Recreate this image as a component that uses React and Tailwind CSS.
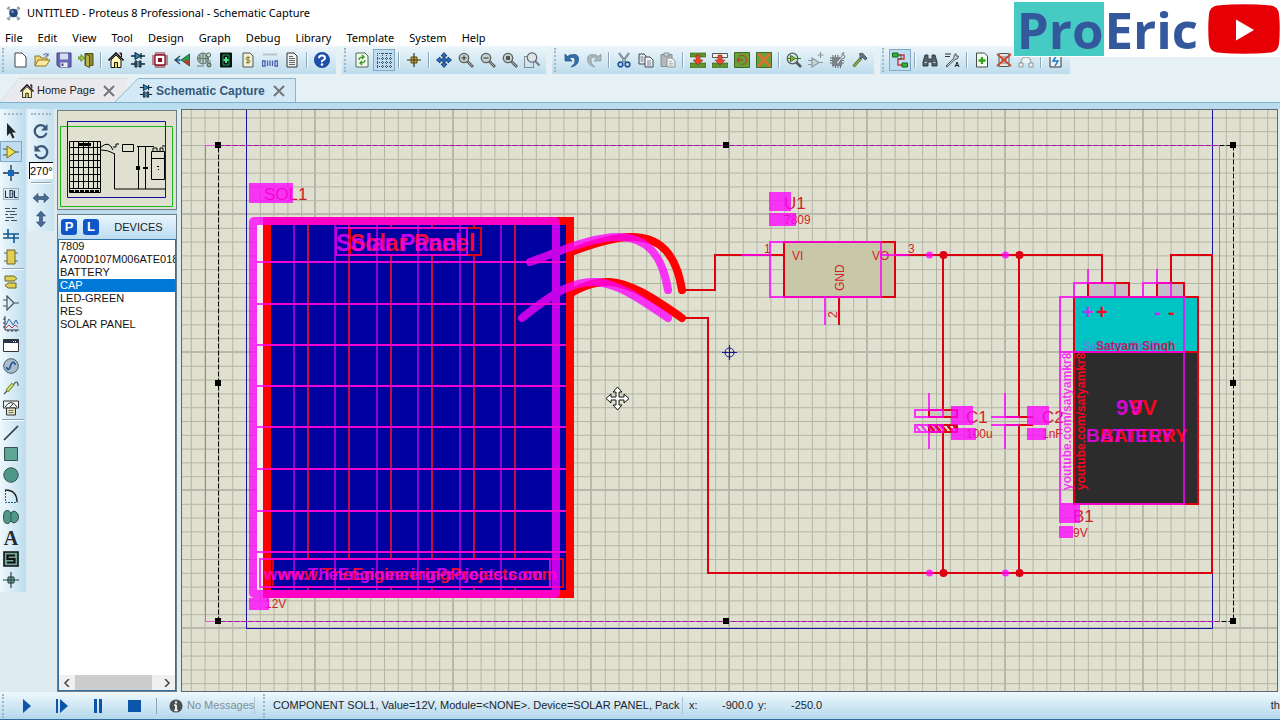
import { useState } from 'react'
import clsx from 'clsx'

const menus = ['File', 'Edit', 'View', 'Tool', 'Design', 'Graph', 'Debug', 'Library', 'Template', 'System', 'Help']

const devices = ['7809', 'A700D107M006ATE018', 'BATTERY', 'CAP', 'LED-GREEN', 'RES', 'SOLAR PANEL']

const page = <path d="M3 1h7l4 4v10H3z" fill="#fff" stroke="#444" />

const lens = (
  <>
    <path d="M9.5 9.5L15 15" stroke="#555" strokeWidth="2.6" />
    <path d="M10 10l4.500 4.500" stroke="#bbb" strokeWidth="1" />
    <circle cx="6" cy="6" r="4.700" fill="#c3cfcb" stroke="#59605f" strokeWidth="1.300" />
  </>
)

const house = (
  <>
    <path d="M3 8v7.500h10V8L8 3z" fill="#fff8b8" stroke="#111" />
    <path d="M.5 8.500L8 1l7.500 7.500" fill="none" stroke="#111" strokeWidth="1.600" />
    <path d="M11.500 1h2v4" fill="#a22" stroke="#111" />
    <path d="M6.500 15.500v-5h3v5" fill="#e8d860" stroke="#111" />
  </>
)

const schematic = (
  <>
    <path d="M1 4h14M1 12h4M11 12h4M11 1v6" stroke="#15242f" strokeWidth="1.300" />
    <path d="M5 .5v7L11 4z" fill="#2484b8" stroke="#15242f" />
    <path d="M5 9h2v6H5zM9 9h2v6H9z" fill="#2f6f96" stroke="#15242f" />
  </>
)

const board = <path d="M0 1h16v4H0zM0 11h16v5H0z" fill="#5d9630" stroke="#3d6a22" strokeWidth=".7" />

const icons = {
  app: (
    <>
      <path d="M2 2l12 12M14 2L2 14" stroke="#a9b6c6" strokeWidth="2.500" />
      <path d="M1 3l3-2M12 1l3 2M1 13l3 2M12 15l3-2" stroke="#8897aa" strokeWidth="1.500" />
      <circle cx="8" cy="7.500" r="4.600" fill="#23457c" />
      <circle cx="7" cy="6" r="1.800" fill="#6587ba" />
    </>
  ),
  new: page,
  open: (
    <>
      <path d="M1 14V4h5l1 2h6v3" fill="#f1d873" stroke="#8a7432" />
      <path d="M1 14l3-6h12l-4 6z" fill="#fce99a" stroke="#8a7432" />
      <path d="M9 3q3-3 5 0m0-2v3h-3" fill="none" stroke="#4a6c9a" />
    </>
  ),
  save: (
    <>
      <path d="M1 1h14v14H3l-2-2z" fill="#6868b8" stroke="#41417d" />
      <path d="M4 1.500h8v6H4z" fill="#d6dcf1" />
      <path d="M4.500 10.500h7V15h-7z" fill="#eee" />
      <path d="M5.500 11.500h2V14h-2z" fill="#444a82" />
    </>
  ),
  exit: (
    <>
      <path d="M7 1.500h8v12H7z" fill="#8c8c2a" stroke="#4f4f18" />
      <path d="M7.500 2l4 2v11.500l-4-2z" fill="#b8b450" stroke="#4f4f18" />
      <path d="M0 5h3V2.500L6.500 6 3 9.500V7H0z" fill="#a6d238" stroke="#55741c" strokeWidth=".8" />
    </>
  ),
  home: house,
  schematic,
  chip: (
    <>
      <path d="M4 0v16M6 0v16M8 0v16M10 0v16M12 0v16M0 4h16M0 6h16M0 8h16M0 10h16M0 12h16" stroke="#8d1021" strokeWidth=".9" />
      <path d="M3 3h10v10H3z" fill="#fff" stroke="#8d1021" strokeWidth="1.300" />
      <path d="M6 6h4v4H6z" fill="#8d1021" />
    </>
  ),
  view3d: (
    <>
      <path d="M15.500 2v12L7 8z" fill="#2e9952" stroke="#14522a" strokeWidth=".8" />
      <path d="M15.500 8v6L9 9z" fill="#b83a2c" />
      <path d="M6 4L1 8l5 4M1 8h4" fill="none" stroke="#2d4355" strokeWidth="1.300" />
      <circle cx="5" cy="8" r="1.600" fill="#1e88b8" />
    </>
  ),
  gerber: (
    <>
      <circle cx="7" cy="6.500" r="5.500" fill="#b6c5c0" stroke="#59706a" />
      <path d="M2 6.500h10M7 1v11M4 2.500v8M10 2.500v8M1 14h7M12 4v11M14 8v7" stroke="#597268" strokeWidth=".9" />
      <circle cx="12.500" cy="3" r="2" fill="#dfe8e4" stroke="#3f5d54" />
      <circle cx="13" cy="13" r="2" fill="#9eb3ac" stroke="#3f5d54" />
    </>
  ),
  explorer: (
    <>
      <path d="M2.500 1h11v14h-11z" fill="#08140f" stroke="#111" />
      <path d="M5 3h6v10H5z" fill="none" stroke="#1c9d5c" />
      <path d="M8 5v6M5.500 8h5" stroke="#53e78f" strokeWidth="2" />
    </>
  ),
  bom: (
    <>
      <path d="M3 1h7l3 3v11H3z" fill="#eef0d8" stroke="#555" />
      <path d="M10 5.500H7.500q-1.500 0-1.500 1.200T7.500 8h1q1.500 0 1.500 1.300t-1.500 1.200H6M8 4v8" fill="none" stroke="#857a24" />
    </>
  ),
  source: (
    <>
      <path d="M1 2.500h14" stroke="#b8c4d0" strokeWidth="2" />
      <path d="M.5 9h2.500v5H.5zM13 9h2.500v5H13zM5.500 8.500V14M8 8.500V14M10.500 8.500V14" fill="none" stroke="#4d62a8" strokeWidth="1.300" />
    </>
  ),
  notes: (
    <>
      <path d="M3 1h7l3 3v11H3z" fill="#eef3f3" stroke="#333" />
      <path d="M5 4.500h4M5 6.500h6M5 8.500h6M5 10.500h6M5 12.500h6" stroke="#555" strokeWidth=".9" />
    </>
  ),
  help: (
    <>
      <circle cx="8" cy="8" r="7.700" fill="#1c50ae" stroke="#123a80" strokeWidth=".6" />
      <path d="M5 6.200Q5 3.500 8 3.500t3 2.500q0 1.500-1.700 2.200T8 10.200" fill="none" stroke="#fff" strokeWidth="2" />
      <circle cx="8" cy="12.600" r="1.300" fill="#fff" />
    </>
  ),
  redraw: (
    <>
      <path d="M2 1h9l3 3v11H2z" fill="#f3faef" stroke="#4e6a58" />
      <path d="M5 8q0-3 4.500-3M8 3l2 2-2 2M11 8q0 3-4.500 3M8 9l-2 2 2 2" fill="none" stroke="#3da023" strokeWidth="1.400" />
    </>
  ),
  grid: (
    <path d="M1 1.500h15M1 6.500h15M1 10.500h15M1 14.500h15M1.500 1v15M6.500 1v15M10.500 1v15M14.500 1v15" stroke="#40505c" strokeDasharray="1 1" />
  ),
  origin: (
    <>
      <path d="M8 1v14M1 8h14" stroke="#38301a" strokeWidth="1.200" />
      <path d="M5 5h6v6H5z" fill="#cfae2c" stroke="#5b4a12" />
      <path d="M8 5v6M5 8h6" stroke="#38301a" />
    </>
  ),
  pan: (
    <path d="M8 .5L11 4H9v3h3V5l3.500 3L12 11V9H9v3h2l-3 3.500L5 12h2V9H4v2L.5 8 4 5v2h3V4H5z" fill="#2a6fc4" stroke="#123767" strokeWidth=".9" />
  ),
  zoomIn: <>{lens}<path d="M3.500 6h5M6 3.500v5" stroke="#333" /></>,
  zoomOut: <>{lens}<path d="M3.500 6h5" stroke="#333" /></>,
  zoomAll: <>{lens}<path d="M4 4h4v4H4z" fill="#555" /></>,
  zoomArea: (
    <>
      <path d="M.5 4.500h9v11h-9z" fill="none" stroke="#333" strokeDasharray="1 1" />
      <g transform="translate(2 0)">
        <path d="M9 9l4.500 4.500" stroke="#777" strokeWidth="2" />
        <circle cx="6" cy="5.500" r="4.700" fill="#dce4e6" stroke="#667" strokeWidth="1.200" />
      </g>
    </>
  ),
  undo: <path d="M1 2v7h7L5.500 6.500Q10 3.500 11 7.500T7 15q7-1.500 7.500-7T10 2.500 3.500 4.500z" fill="#2f6fae" stroke="#204d7c" strokeWidth=".7" />,
  redo: <path d="M15 2v7H8l2.500-2.500Q6 3.500 5 7.500T9 15Q2 13.500 1.500 8T6 2.500t6.500 2z" fill="#abb7bd" stroke="#87949b" strokeWidth=".7" />,
  cut: (
    <>
      <path d="M3 1l6.500 9M13 1L6.500 10" stroke="#4b5a68" strokeWidth="2" />
      <path d="M3 1l6.500 9M13 1L6.500 10" stroke="#dde6ea" strokeWidth=".7" />
      <circle cx="4.500" cy="12.500" r="2.300" fill="none" stroke="#23569a" strokeWidth="1.700" />
      <circle cx="11.500" cy="12.500" r="2.300" fill="none" stroke="#23569a" strokeWidth="1.700" />
    </>
  ),
  copy: (
    <>
      <path d="M1 2h5l2 2v8H1z" fill="#e8eef2" stroke="#3c4650" />
      <path d="M7 5h5l3 3v7H7z" fill="#f4f8fa" stroke="#3c4650" />
      <path d="M2.500 5h3M2.500 7h3M2.500 9h3M9 9h4M9 11h4M9 13h4" stroke="#66727c" strokeWidth=".9" />
    </>
  ),
  paste: (
    <>
      <path d="M1 2.500h11v12H1z" fill="#b4babc" stroke="#868d90" />
      <path d="M4 1h5v3H4z" fill="#d8dcdd" stroke="#868d90" />
      <path d="M7 6h5l3 3v6H7z" fill="#eef1f2" stroke="#8c9396" />
      <path d="M9 9.500h3M9 11.500h4M9 13h4" stroke="#a0a7aa" strokeWidth=".8" />
    </>
  ),
  blockCopy: <>{board}<path d="M6 3h4v5h3l-5 5-5-5h3z" fill="#e8482c" stroke="#9a2415" strokeWidth=".6" /></>,
  blockMove: (
    <>
      <path d="M.5 1.500h15v4H.5z" fill="#f2f5f3" stroke="#555" />
      <path d="M0 11h16v5H0z" fill="#5d9630" stroke="#3d6a22" strokeWidth=".7" />
      <path d="M6 3h4v5h3l-5 5-5-5h3z" fill="#e8482c" stroke="#9a2415" strokeWidth=".6" />
    </>
  ),
  blockRotate: (
    <>
      <path d="M.5.500h15v15H.5z" fill="#6ba038" stroke="#3d6a22" />
      <path d="M3 8h6M5.500 5.500L3 8l2.500 2.500M5 4q6-2 7.500 3T7 12.500" fill="none" stroke="#a0502a" strokeWidth="1.300" />
    </>
  ),
  blockDelete: (
    <>
      <path d="M.5.500h15v15H.5z" fill="#6ba038" stroke="#3d6a22" />
      <path d="M2 1.500l12 13M14 1.500l-12 13" stroke="#f06a30" strokeWidth="2.200" />
    </>
  ),
  pick: (
    <>
      <path d="M10 10l5 5" stroke="#555" strokeWidth="2.600" />
      <circle cx="6.500" cy="6.500" r="5.300" fill="#d5e3dc" stroke="#4b5f68" strokeWidth="1.200" />
      <path d="M4.500 3.500v6l5-3z" fill="#8bbd3d" stroke="#3f6d23" />
      <path d="M1.500 6.500h3M9.500 6.500H15" stroke="#3f6d23" />
    </>
  ),
  makeDevice: <path d="M4 6v9l7-4.500zM0 8.500h4M0 12.500h4M11 10.500h4M12.500 0v6M9.500 3h6" fill="#cbd6da" stroke="#8d999e" strokeWidth="1.200" />,
  package: (
    <>
      <path d="M3 3v12M5.500 3v13M8 3v13M10.500 5v11M0 6h14M0 8.500h14M0 11h14" stroke="#5e6669" />
      <path d="M2 5h10v9H2z" fill="#7b8488" />
      <path d="M6 11l6-7q-1-3 2-3.500L13 3l2 1q0 3-3 2.500L8 12z" fill="#e5eaec" stroke="#666f73" strokeWidth=".8" />
    </>
  ),
  decompose: (
    <>
      <path d="M1.500 14.500L9 6" stroke="#53702c" strokeWidth="3" />
      <path d="M1.500 14.500L9 6" stroke="#93b04c" strokeWidth="1.300" />
      <path d="M7 2q4-2 5 1l3 3-1.500 2-3-2.500L8 7" fill="#67737a" stroke="#3a454b" strokeWidth=".8" />
    </>
  ),
  autoroute: (
    <>
      <path d="M7 3h5v4H6v6h5" fill="none" stroke="#c8383a" strokeWidth="1.400" />
      <path d="M4 3h5v4H6" fill="none" stroke="#555" />
      <path d="M.5 1h5.500v4H.5zM10 11h5.500v4H10z" fill="#35b42d" stroke="#17631a" />
    </>
  ),
  search: (
    <>
      <path d="M3 3h3v4h4V3h3l2 7v4h-5v-4H6v4H1v-4z" fill="#56626a" stroke="#2b343a" strokeWidth=".9" />
      <path d="M2.500 10.500h2.500M11 10.500h2.500" stroke="#c6d0d6" />
    </>
  ),
  property: (
    <>
      <path d="M1 2h6M1 4.500h5" stroke="#333" />
      <path d="M2 14l8-8q-1-3 2-4.500V4h2.500q0 3.500-3.500 3.500L3 15z" fill="#cdd6da" stroke="#3c484f" strokeWidth=".9" />
      <path d="M11 15l2-5 2 5M12 13.500h2" fill="none" stroke="#222" />
    </>
  ),
  addSheet: (
    <>
      <path d="M2.500 1h8l3 3v11h-11z" fill="#f6faf5" stroke="#3f4c48" />
      <path d="M8 5v7M4.500 8.500h7" stroke="#33a317" strokeWidth="2.300" />
    </>
  ),
  removeSheet: (
    <>
      <path d="M3 1.500h10v13H3z" fill="#e2e5e4" stroke="#555" />
      <path d="M5 5h6M5 8h6M5 11h6" stroke="#777" />
      <path d="M1 2l14 12M15 2L1 14" stroke="#cf412b" strokeWidth="1.700" />
    </>
  ),
  exitSheet: <path d="M1 11h4v4H1zM11 11h4v4h-4zM3 11q0-6 5-6t5 6M8 5V2" fill="#edf1f2" stroke="#8a9499" />,
  erc: (
    <>
      <path d="M2 2h11v13H2z" fill="#eaf3f8" stroke="#333" />
      <path d="M9 3L5 9h5l-3 5" fill="none" stroke="#1673c6" strokeWidth="1.400" />
    </>
  ),
  select: <path d="M4 0v13l3-3 2.500 5.500 2-1L9 9.500h4z" fill="#20262c" />,
  component: (
    <>
      <path d="M0 5h5M0 11h5M12 8h4" stroke="#4b5238" strokeWidth="1.200" />
      <path d="M4 2v12l8.500-6z" fill="#efe04c" stroke="#6c6a20" />
    </>
  ),
  junction: (
    <>
      <path d="M8 0v16M0 8h16" stroke="#1d3245" strokeWidth="1.300" />
      <path d="M5 5h6v6H5z" fill="#1668b6" />
    </>
  ),
  label: (
    <>
      <path d="M.5 2.500h15v11H.5z" fill="none" stroke="#678" strokeDasharray="1 1" />
      <path d="M2.500 4.500v7h3M7 4.500v7h1.500q1.500 0 1.500-2T8.500 8Q10 8 10 6.200T8.500 4.500zM11.500 4.500v7h3" fill="none" stroke="#1d2f44" strokeWidth="1.100" />
    </>
  ),
  script: <path d="M2 1.500h5M9 1.500h5M3 4.500h9M2 7.500h3M7 7.500h7M3 10.500h8M2 13.500h4M8 13.500h6" stroke="#44525a" />,
  bus: <path d="M0 6h16M0 10h16M5 1v9M11 6v9" stroke="#16588c" strokeWidth="1.600" />,
  subcircuit: (
    <>
      <path d="M1 4h3M1 12h3M12 4h3M12 12h3" stroke="#6b6431" />
      <path d="M4 1h8v14H4z" fill="#e1cf52" stroke="#6b6431" />
    </>
  ),
  terminal: (
    <>
      <path d="M2 2h9l3 2.500L11 7H2z" fill="#e1cf52" stroke="#6b6431" />
      <path d="M13 9H5l-3 2.500L5 14h8z" fill="#e1cf52" stroke="#6b6431" />
    </>
  ),
  pin: <path d="M0 5h4M0 11h4M4 1v14l7-7zM11 8h5" fill="none" stroke="#46525a" strokeWidth="1.200" />,
  graph: (
    <>
      <path d="M2 0v14h14M0 3h2M0 7h2M0 11h2M5 14v2M9 14v2M13 14v2" fill="none" stroke="#333" />
      <path d="M3 9l3-6 4 6 3-5 2 4" fill="none" stroke="#2463b2" />
      <path d="M3 12l3-3 3 3 3-3 3 2" fill="none" stroke="#b43a4e" />
    </>
  ),
  popup: (
    <>
      <path d="M.5 2.500h15v12H.5z" fill="#fbfdfe" stroke="#333" />
      <path d="M1 3h14v3H1z" fill="#27344e" />
      <path d="M10 4.500h1M12 4.500h1" stroke="#fff" />
    </>
  ),
  generator: (
    <>
      <circle cx="8" cy="8" r="7.300" fill="#a9bdcd" stroke="#4c5c69" />
      <path d="M3.500 9q1 4 3 1.500l2-5q2.500-3 4 1.500" fill="none" stroke="#1c4e91" strokeWidth="1.500" />
    </>
  ),
  probe: (
    <>
      <path d="M1 15l4-4 6-6q3-4 4 0v2" fill="none" stroke="#4e5940" strokeWidth="1.200" />
      <path d="M4 12l6-7" stroke="#75862b" strokeWidth="3.500" />
      <path d="M4.500 11.500L9.500 5.500" stroke="#ddec72" strokeWidth="1.800" />
    </>
  ),
  meter: (
    <>
      <path d="M.5 1h15v7H.5z" fill="#f3f6f6" stroke="#333" />
      <path d="M2 7q6-9 12 0M7 7l4-4" fill="none" stroke="#333" />
      <path d="M3.500 8h9v7h-9z" fill="#e7e3c0" stroke="#333" />
      <path d="M5.500 10.500h5M5.500 12.500h5" stroke="#776" />
    </>
  ),
  line: <path d="M1 15L15 1" stroke="#333b42" strokeWidth="1.700" />,
  box: <path d="M1.500 1.500h13v13h-13z" fill="#5fa596" stroke="#35524c" />,
  circle: <circle cx="8" cy="8" r="7.200" fill="#4d9888" stroke="#35524c" />,
  arc: (
    <>
      <path d="M2.500 2v12.500h12" fill="none" stroke="#235b8c" strokeDasharray="2 1" />
      <path d="M2 2q12 0 12 12" fill="none" stroke="#222" strokeWidth="1.400" />
    </>
  ),
  blob: <path d="M8 4Q6.500 1 3.500 1.500T.5 8t3 6.500T8 12q1.500 3 4.500 1.500T15.500 8t-3-5.500T8 4zM8 4v8" fill="#4d9888" stroke="#35524c" />,
  symbol: (
    <>
      <path d="M1 1h14v14H1z" fill="#6da899" stroke="#111" strokeWidth="1.600" />
      <path d="M12 4.500H4.500v3.500h7v3.500H4" fill="none" stroke="#111" strokeWidth="2.200" />
    </>
  ),
  marker: (
    <>
      <path d="M8 0v16M0 8h16" stroke="#2e4544" strokeWidth="1.200" />
      <path d="M5 5h6v6H5z" fill="#5fa596" stroke="#2e4544" />
      <path d="M8 4v8M4 8h8" stroke="#2e4544" />
    </>
  ),
  rotateCw: (
    <>
      <path d="M12.500 4.500A6 6 0 1 0 13.500 10" fill="none" stroke="#3b5576" strokeWidth="2.200" />
      <path d="M14.500 1v6.500H8z" fill="#3b5576" />
    </>
  ),
  rotateCcw: (
    <>
      <path d="M3.500 4.500A6 6 0 1 1 2.500 10" fill="none" stroke="#3b5576" strokeWidth="2.200" />
      <path d="M1.500 1v6.500H8z" fill="#3b5576" />
    </>
  ),
  flipX: <path d="M0 8l5-4.500v3h6v-3L16 8l-5 4.500v-3H5v3z" fill="#466a94" stroke="#2c4463" strokeWidth=".6" />,
  flipY: <path d="M8 0l4.500 5h-3v6h3L8 16l-4.500-5h3V5h-3z" fill="#466a94" stroke="#2c4463" strokeWidth=".6" />,
}

// '|' is a separator, a trailing '*' marks a pressed button
const toolbars = [
  ['new', 'open', 'save', 'exit', '|', 'home', 'schematic', 'chip', 'view3d', 'gerber', 'explorer', 'bom', 'source', 'notes', '|', 'help'],
  ['redraw', 'grid*', '|', 'origin', '|', 'pan', 'zoomIn', 'zoomOut', 'zoomAll', 'zoomArea'],
  ['undo', 'redo', '|', 'cut', 'copy', 'paste', '|', 'blockCopy', 'blockMove', 'blockRotate', 'blockDelete', '|', 'pick', 'makeDevice', 'package', 'decompose'],
  ['autoroute*', '|', 'search', 'property', '|', 'addSheet', 'removeSheet', 'exitSheet', '|', 'erc'],
]

const modes = [
  'select', 'component*', 'junction', 'label', 'script', 'bus', 'subcircuit', '|',
  'terminal', 'pin', 'graph', 'popup', 'generator', 'probe', 'meter', '|',
  'line', 'box', 'circle', 'arc', 'blob', 'text', 'symbol', 'marker',
]

function Icon({ name, className = 'size-4' }) {
  if (name === 'text') {
    return <span className="font-['Liberation_Serif',serif] text-[20px] leading-5 font-bold text-[#242b31]">A</span>
  }
  return (
    <svg viewBox="0 0 16 16" className={clsx('shrink-0', className)} aria-hidden="true">
      {icons[name]}
    </svg>
  )
}

function ToolButton({ id, className }) {
  const active = id.endsWith('*')
  const name = id.replace('*', '')
  return (
    <button
      aria-label={name}
      aria-pressed={active}
      className={clsx(
        'flex shrink-0 items-center justify-center border',
        active ? 'border-[#7fa9c4] bg-[#bfdcf0]' : 'border-transparent',
        className,
      )}
    >
      <Icon name={name} />
    </button>
  )
}

function Grip() {
  return <span className="h-6 border-l-2 border-dotted border-[#9fb8c8]" />
}

function Toolbar({ items }) {
  return (
    <div className="flex h-7 items-center bg-linear-to-b from-[#edf6fb] to-[#bddcec] pr-[3px]">
      <span className="flex w-[9px] shrink-0 pl-0.5"><Grip /></span>
      {items.map((id, i) =>
        id === '|' ? (
          <span key={i} className="flex w-2 shrink-0 justify-center">
            <span className="h-4 border-l border-r border-l-[#8aa5b5] border-r-white" />
          </span>
        ) : (
          <ToolButton key={i} id={id} className="h-[22px] w-[22px]" />
        ),
      )}
    </div>
  )
}

function CloseMark() {
  return (
    <svg viewBox="0 0 12 12" className="size-3" aria-hidden="true">
      <path d="M1 1l10 10M11 1L1 11" stroke="#72777b" strokeWidth="2" />
    </svg>
  )
}

function Tab({ icon, label, active }) {
  const fill = active ? '#d3eaf6' : '#e9e9ee'
  const line = active ? '#8db4cb' : '#d5dde2'
  return (
    <div className={clsx('flex h-6', active && '-ml-3')}>
      <svg viewBox="0 0 24 24" preserveAspectRatio="none" className={clsx('h-6', active ? 'w-6' : 'w-5')} aria-hidden="true">
        <path d="M0 24L24 0v24z" fill={fill} />
        <path d="M0 24L23 .5h1" fill="none" stroke={line} />
      </svg>
      <div
        className={clsx(
          'flex items-center gap-2 border-t',
          active ? 'border-r border-[#8db4cb] bg-[#d3eaf6] pr-2.5' : 'border-[#d5dde2] bg-[#e9e9ee] pr-3',
        )}
      >
        <button className={clsx('flex items-center gap-[3px]', active ? 'text-[12px] font-bold text-[#35597e]' : 'text-[11px] text-[#1c2226]')}>
          <Icon name={icon} className="size-3.5" />
          {label}
        </button>
        <button aria-label="Close tab">
          <CloseMark />
        </button>
      </div>
    </div>
  )
}

function Header() {
  return (
    <header className="relative bg-white">
      <div className="flex h-[26px] items-center gap-1.5 pl-1.5 font-['Noto_Sans',sans-serif] text-[11px] text-black">
        <Icon name="app" className="size-[15px]" />
        <h1>UNTITLED - Proteus 8 Professional - Schematic Capture</h1>
      </div>
      <nav className="flex h-5 items-end gap-[15px] pl-[5px] font-['Noto_Sans',sans-serif] text-[11px] leading-4 text-black">
        {menus.map((m) => (
          <button key={m}>{m}</button>
        ))}
      </nav>
      <div className="flex gap-1.5 bg-[#e6f1f5]">
        {toolbars.map((items, i) => (
          <Toolbar key={i} items={items} />
        ))}
      </div>
      <Banner />
    </header>
  )
}

function Banner() {
  return (
    <div className="absolute top-0 right-0 flex h-[57px] items-start bg-white">
      <div className="mt-0.5 flex h-[54px] items-center font-['Open_Sans',sans-serif] text-[51px] leading-[54px] font-bold text-[#34589c]">
        <span className="bg-[#45cbc3] pr-px pl-[3px]">Pro</span>
        <span>Eric</span>
      </div>
      <svg viewBox="0 0 72 50" className="mt-1 ml-2.5 h-[50px] w-[72px]" aria-hidden="true">
        <path d="M9 1.500Q36-1 63 1.500 70 2.500 71 10q1.500 15 0 30-1 7.500-8 8.500-27 2.500-54 0-7-1-8-8.500-1.500-15 0-30Q2 2.500 9 1.500z" fill="#e60005" />
        <path d="M28 15.500v21L46 26z" fill="#fff" />
      </svg>
    </div>
  )
}

function ModeBar() {
  return (
    <div className="w-[26px] bg-linear-to-r from-[#eef8fd] to-[#bcdcee] pb-0.5">
      <div className="mx-1 mt-1 mb-[5px] border-t-2 border-dotted border-[#9fb8c8]" />
      {modes.map((id, i) =>
        id === '|' ? (
          <div key={i} className="mx-0.5 my-px h-0.5 border-t border-b border-t-[#8aa5b5] border-b-white" />
        ) : (
          <ToolButton key={i} id={id} className="h-[21px] w-[22px]" />
        ),
      )}
    </div>
  )
}

function RotateBar() {
  return (
    <div className="flex w-[26px] flex-col items-center bg-linear-to-r from-[#e8f5fc] to-[#c6e1ef] pb-0.5">
      <div className="mt-1 mb-[5px] w-5 border-t-2 border-dotted border-[#9fb8c8]" />
      <ToolButton id="rotateCw" className="h-[21px] w-[22px]" />
      <ToolButton id="rotateCcw" className="h-[21px] w-[22px]" />
      <input
        aria-label="Rotation angle"
        defaultValue="270°"
        className="h-[17px] w-6 border-t border-l border-black bg-white text-[11px] text-black"
      />
      <div className="my-[3px] h-0.5 w-5 border-t border-b border-t-[#8aa5b5] border-b-white" />
      <ToolButton id="flipX" className="h-[21px] w-[22px]" />
      <ToolButton id="flipY" className="h-[21px] w-[22px]" />
    </div>
  )
}

function Overview() {
  return (
    <div className="h-[100px] border border-[#6f7d86] bg-[#e0e0d0]">
      <svg viewBox="58 111 118 98" className="h-full w-full" aria-hidden="true">
        <g fill="none">
          <path d="M60.500 126.500h112v80h-112z" stroke="#1eb41e" />
          <path d="M67.500 121.500h98v76h-98z" stroke="#1010a8" />
          <g stroke="#000">
            <path d="M69.500 141.500h31v51h-31zM69 188.500h32M69 147.500h32M69 154.500h32M69 160.500h32M69 167.500h32M69 174.500h32M69 181.500h32M73.500 142v46M78.500 142v46M83.500 142v46M88.500 142v46M93.500 142v46M97.500 142v46" />
            <path d="M78 144.500h13" strokeWidth="3" />
            <path d="M70 191h31" strokeWidth="2" strokeDasharray="4 1" />
            <path d="M101 147q8-7 12 3M101 150q7 0 12 3M113 147h3v-3h3M122.500 144.500h11v7h-11zM113 153.500h1.500v35.500h51M137 146.500h17M138.500 146v43M145.500 146v43" />
            <path d="M151.500 151.500h13v28h-13zM151 158.500h14M153 151v-3h4v3M160 151v-3h3v3M162 146h3" />
          </g>
          <path d="M136 166h4v4h-4zM143 167h5v2h-5zM157 166h2v1h-2zM158 169h1v1h-1z" fill="#000" />
        </g>
      </svg>
    </div>
  )
}

function Devices() {
  const [selected, setSelected] = useState('CAP')
  return (
    <div className="mt-1 flex min-h-0 flex-1 flex-col border border-[#6f7d86] bg-white">
      <div className="flex h-6 items-center gap-1.5 bg-linear-to-b from-[#e9f6fd] to-[#bcdcf0] pl-[3px]">
        <button className="h-4 w-4 rounded-[3px] bg-[#0f57c8] text-[13px] leading-4 font-bold text-white">P</button>
        <button className="h-4 w-4 rounded-[3px] bg-[#0f57c8] text-[13px] leading-4 font-bold text-white">L</button>
        <h2 className="flex-1 pr-1 text-center text-[11px] text-[#1d2329]">DEVICES</h2>
      </div>
      <div className="flex min-h-0 flex-1 flex-col border border-[#2f72a5]">
        <ul className="flex-1 overflow-hidden">
          {devices.map((d) => (
            <li key={d}>
              <button
                onClick={() => setSelected(d)}
                className={clsx(
                  'block h-[13px] w-full overflow-hidden pl-px text-left text-[11px] leading-[13px] whitespace-nowrap',
                  selected === d ? 'bg-[#0078d7] text-white' : 'text-[#111]',
                )}
              >
                {d}
              </button>
            </li>
          ))}
        </ul>
        <div className="flex h-[15px] items-center bg-[#f0f0f0]">
          <button aria-label="Scroll left" className="flex h-full w-4 items-center justify-center">
            <svg viewBox="0 0 8 8" className="size-2"><path d="M6 0L2 4l4 4" fill="none" stroke="#444" strokeWidth="1.500" /></svg>
          </button>
          <div className="flex h-full flex-1"><span className="w-11/12 bg-[#cdcdcd]" /></div>
          <button aria-label="Scroll right" className="flex h-full w-4 items-center justify-center">
            <svg viewBox="0 0 8 8" className="size-2"><path d="M2 0l4 4-4 4" fill="none" stroke="#444" strokeWidth="1.500" /></svg>
          </button>
        </div>
      </div>
    </div>
  )
}

const cols = [308, 349, 391, 432, 474, 515]
const rows = [262, 304, 345, 386, 427, 469, 511, 552]

function SolarText() {
  return (
    <g fontWeight="bold" stroke="none">
      <text x="350" y="251" fontSize="23">Solar Panel</text>
      <text x="278" y="580" fontSize="17">www.TheEngineeringProjects.com</text>
    </g>
  )
}

function BatteryText() {
  return (
    <g fontWeight="bold" stroke="none">
      <text x="1096" y="319" fontSize="20">+</text>
      <text x="1168" y="319" fontSize="20">-</text>
      <text x="1130" y="415" fontSize="22">9V</text>
      <text x="1100" y="442" fontSize="19">BATTERY</text>
      <g clipPath="url(#batteryBody)">
        <text transform="translate(1085 490) rotate(-90)" fontSize="12">youtube.com/satyamkr80</text>
      </g>
    </g>
  )
}

const upperCable = 'M544 262C604 240 669 208 682 290'
const lowerCable = 'M536 318C600 265 620 275 682 318'

// Parts at their committed position
function Parts() {
  return (
    <g stroke="#dc0010" strokeWidth="2" fill="none">
      <path d="M682 290h33v-35h69M682 318h26v255h504V255h-41v28M895 255h207v28M943 255v155M943 432v141M1019 255v162M1019 425v148" />
      <g stroke="#ff0000" strokeWidth="8" strokeLinecap="round">
        <path d={upperCable} />
        <path d={lowerCable} />
      </g>
      <rect x="257" y="224" width="6" height="364" fill="#f6eeee" stroke="none" />
      <rect x="267" y="221" width="303" height="373" fill="#0000a0" stroke="#ff0000" strokeWidth="8" />
      <g stroke="#d00a38">
        {cols.map((x) => <path key={x} d={`M${x} 225v366`} />)}
        {rows.map((y) => <path key={y} d={`M271 ${y}h295`} />)}
      </g>
      <rect x="350" y="228" width="131" height="27" fill="#0000a0" />
      <rect x="273" y="559" width="290" height="28" fill="#0000a0" />
      <g fill="#f0083c"><SolarText /></g>

      <rect x="784" y="242" width="111" height="55" fill="#c8c8a8" />
      <path d="M839 297v28" />
      <rect x="929" y="410" width="28" height="7" fill="#c8c8b8" />
      <rect x="929" y="425" width="28" height="7" fill="url(#hatch)" />
      <path d="M1005 417h28M1005 425h28" />

      <rect x="1088" y="283" width="41" height="14" fill="#c6bdc6" />
      <rect x="1157" y="283" width="27" height="14" fill="#c6bdc6" />
      <rect x="1074" y="297" width="124" height="207" fill="#2c2c2c" />
      <rect x="1074" y="297" width="124" height="55" fill="#00c4c4" />
      <g fill="#f5051e"><BatteryText /></g>
      <text x="1096" y="350" fontSize="12" fontWeight="bold" fill="#a8284a" stroke="none">Satyam Singh</text>

      <g fill="#dc0010" stroke="none">
        {[255, 573].map((y) => (
          <g key={y}>
            <circle cx="943.5" cy={y} r="4" />
            <circle cx="1019.5" cy={y} r="4" />
          </g>
        ))}
      </g>
      <g fill="#d21e28" stroke="none" fontSize="12">
        <g fontSize="17">
          <text x="264" y="200">SOL1</text>
          <text x="784" y="209">U1</text>
          <text x="966" y="423">C1</text>
          <text x="1042" y="423">C2</text>
          <text x="1073" y="522">B1</text>
        </g>
        <text x="265" y="608">12V</text>
        <text x="784" y="224">7809</text>
        <text x="966" y="438">100u</text>
        <text x="1042" y="438">1nF</text>
        <text x="1073" y="537">9V</text>
        <text x="792" y="260">VI</text>
        <text x="872" y="260">VO</text>
        <text x="764" y="253">1</text>
        <text x="908" y="253">3</text>
        <text transform="translate(844 291) rotate(-90)">GND</text>
        <text transform="translate(837 318) rotate(-90)">2</text>
      </g>
    </g>
  )
}

// Translucent copy drawn one grid step to the left while dragging
function DragGhost() {
  return (
    <g transform="translate(-14 0)" stroke="#ff00ff" strokeWidth="2" fill="none" opacity=".77">
      <g strokeWidth="8" strokeLinecap="round">
        <path d={upperCable} />
        <path d={lowerCable} />
      </g>
      <rect x="267" y="221" width="303" height="373" rx="1" strokeWidth="8" />
      <g strokeOpacity=".75">
        {cols.map((x) => <path key={x} d={`M${x} 225v366`} />)}
      </g>
      {rows.map((y) => <path key={y} d={`M271 ${y}h309`} />)}
      <path d="M350 228h131v27H350zM274 559h290v28H274z" />
      <g fill="#ff00ff"><SolarText /></g>

      <path d="M784 242h111v55H784zM839 297v28M756 255h28M895 255h28" />
      <path d="M929 410h28v7h-28zM943 393v17M943 432v17M1005 417h28M1005 425h28M1019 393v24M1019 425v24" />
      <rect x="929" y="425" width="28" height="7" fill="url(#ghostHatch)" />
      <path d="M1088 283h41v14h-41zM1157 283h28v14h-28zM1102 269v14M1171 269v14M1074 297h124v207h-124zM1074 352h124" />
      <g fill="#ff00ff"><BatteryText /></g>
      <text x="1096" y="350" fontSize="12" fontWeight="bold" fill="#ff00ff" stroke="none" opacity=".4">Satyam Singh</text>

      <g fill="#ff00ff" stroke="none">
        {[255, 573].map((y) => (
          <g key={y}>
            <circle cx="943.5" cy={y} r="3.5" />
            <circle cx="1019.5" cy={y} r="3.5" />
          </g>
        ))}
        <path d="M263 183h44v20h-44zM263 598h20v12h-20zM783 192h22v19h-22zM783 213h27v13h-27zM965 406h22v19h-22zM965 428h25v12h-25zM1041 406h22v19h-22zM1041 428h19v12h-19zM1073 504h21v19h-21zM1073 526h14v12h-14z" />
      </g>
    </g>
  )
}

function Selection() {
  const handles = [[218, 145], [726, 145], [1233, 145], [218, 383], [1233, 383], [218, 621], [726, 621], [1233, 621]]
  return (
    <g fill="none">
      <path d="M205.5 145.5h1014v476h-1014z" stroke="#f032f0" strokeOpacity=".8" />
      <path d="M218.5 145.5h1015v476h-1015z" stroke="#000" strokeDasharray="5 2" />
      <path d="M218.5 145.5h1001M218.5 621.5h1001" stroke="#f032f0" strokeOpacity=".6" />
      {handles.map(([x, y]) => (
        <rect key={`${x}-${y}`} x={x - 3} y={y - 3} width="6" height="6" fill="#000" />
      ))}
    </g>
  )
}

function SchematicCanvas() {
  return (
    <div className="flex min-w-0 flex-1 overflow-hidden border border-[#5e6a70] bg-[#e0e0d0]">
      <svg className="h-full w-full font-['Liberation_Sans',Arial,sans-serif]" role="img" aria-label="Schematic">
        <defs>
          <pattern id="minor" width="13.8" height="13.8" patternUnits="userSpaceOnUse" x="729" y="352">
            <path d="M.5 0v13.8M0 .5h13.800" stroke="#b4b4a5" />
          </pattern>
          <pattern id="major" width="138" height="138" patternUnits="userSpaceOnUse" x="728" y="351">
            <path d="M1 0v138M0 1h138" stroke="#b9b9ab" strokeWidth="2" />
          </pattern>
          <pattern id="hatch" width="6" height="7" patternUnits="userSpaceOnUse" x="929" y="425">
            <path d="M0 0l6 7" stroke="#dc0010" strokeWidth="2.500" />
          </pattern>
          <pattern id="ghostHatch" width="6" height="7" patternUnits="userSpaceOnUse" x="929" y="425">
            <path d="M0 0l6 7" stroke="#ff00ff" strokeWidth="2" />
          </pattern>
          <clipPath id="batteryBody">
            <rect x="1074" y="353" width="124" height="151" />
          </clipPath>
        </defs>
        <g transform="translate(-182 -110)">
          <rect x="182" y="110" width="100%" height="100%" fill="url(#minor)" />
          <rect x="182" y="110" width="100%" height="100%" fill="url(#major)" />
          <path d="M246.500 100v528.500h966V100" fill="none" stroke="#1414a0" />
          <Parts />
          <DragGhost />
          <Selection />
          <g fill="none" stroke="#14149c">
            <circle cx="729.5" cy="352.5" r="4.5" />
            <path d="M722 352.500h15M729.500 345v15" />
          </g>
          <path
            d="M617.500 387l4.500 5h-3v5h5v-3l5 4.500-5 4.500v-3h-5v5h3l-4.500 5-4.500-5h3v-5h-5v3l-5-4.500 5-4.500v3h5v-5h-3z"
            fill="#fff"
            stroke="#111"
          />
        </g>
      </svg>
    </div>
  )
}

function StatusBar() {
  return (
    <footer className="flex h-7 items-center border-b border-[#2b6a9a] bg-linear-to-b from-[#eef8fd] to-[#b4d8ec] text-[11px] text-[#1d252b]">
      <span className="flex pl-0.5"><Grip /></span>
      <div className="flex items-center gap-5 pl-3.5">
        <button aria-label="Play"><svg viewBox="0 0 16 16" className="size-4"><path d="M5 1v14l8-7z" fill="#0d55a8" /></svg></button>
        <button aria-label="Step"><svg viewBox="0 0 16 16" className="size-4"><path d="M2 1h2v14H2zM6 1v14l8-7z" fill="#0d55a8" /></svg></button>
        <button aria-label="Pause"><svg viewBox="0 0 16 16" className="size-4"><path d="M4 1h3v14H4zM9 1h3v14H9z" fill="#0d55a8" /></svg></button>
        <button aria-label="Stop"><svg viewBox="0 0 16 16" className="size-4"><path d="M2 2h13v12H2z" fill="#0d55a8" /></svg></button>
      </div>
      <span className="ml-3.5 h-4 border-l border-[#8aa5b5]" />
      <div className="ml-3 flex w-[86px] items-center gap-1 border-r border-[#a9c4d4] text-[#858e94]">
        <svg viewBox="0 0 16 16" className="size-3.5 shrink-0" aria-hidden="true">
          <circle cx="8" cy="8" r="7.500" fill="#4a4f53" />
          <path d="M8 2.500v2.500M8 6.500v6.500M6 7h2M6 13h4" stroke="#fff" strokeWidth="2" />
        </svg>
        <span className="whitespace-nowrap">No Messages</span>
      </div>
      <span className="flex pl-2"><Grip /></span>
      <p className="ml-2 w-[410px] border-r border-[#a9c4d4] whitespace-nowrap">
        COMPONENT SOL1, Value=12V, Module=&lt;NONE&gt;. Device=SOLAR PANEL, Pack
      </p>
      <dl className="ml-1.5 flex flex-1">
        <dt className="w-[33px]">x:</dt>
        <dd className="w-9">-900.0</dd>
        <dt className="w-[33px]">y:</dt>
        <dd>-250.0</dd>
      </dl>
      <span>th</span>
    </footer>
  )
}

export default function App() {
  return (
    <div className="flex h-screen flex-col overflow-hidden bg-[#e1eef4] font-['Liberation_Sans',Arial,sans-serif]">
      <Header />
      <div className="flex h-[29px] items-end border-b border-[#7fb0c9] bg-[#e6f1f5]">
        <Tab icon="home" label="Home Page" />
        <Tab icon="schematic" label="Schematic Capture" active />
      </div>
      <div className="h-1.5 bg-[#b9dcee]" />
      <main className="flex min-h-0 flex-1 bg-[#deecf2] pr-0.5">
        <div className="flex items-start gap-0.5 pr-[3px]">
          <ModeBar />
          <RotateBar />
        </div>
        <aside className="mr-1 flex w-[120px] shrink-0 flex-col bg-[#bcdcec] pt-px">
          <Overview />
          <Devices />
        </aside>
        <SchematicCanvas />
      </main>
      <StatusBar />
    </div>
  )
}
